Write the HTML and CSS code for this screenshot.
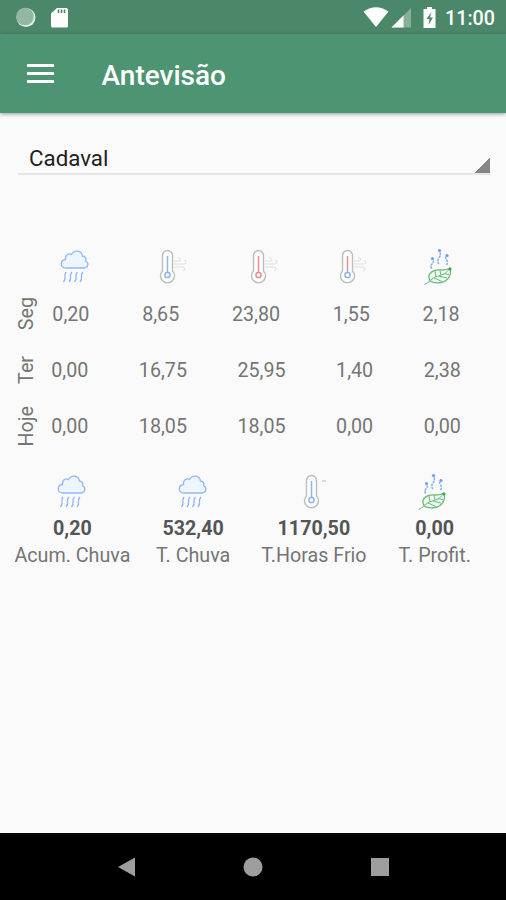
FILE: index.html
```html
<!DOCTYPE html>
<html lang="pt">
<head>
  <meta charset="UTF-8" />
  <meta name="viewport" content="width=device-width, initial-scale=1.0"/>
  <title>Antevisão</title>
  <link rel="stylesheet" href="styles.css">
</head>
<body>

<!-- shared icons -->
<svg class="symbols" width="0" height="0">
  <symbol id="rain" viewBox="0 0 40 40">
    <path d="M11 23C4.500 23 5 15 10.500 14.500C10 9.500 14 8 16.500 9.500C19 4.500 26.500 5 27.500 11C31 11.500 31.500 14 30.500 15.500C34.500 18 33 23 29 23Z" fill="#edf5ff" stroke="#92b8f5" stroke-width="1.300"/>
    <path d="M11 27q-1.500 2 -1 5t-1.500 5M17 27q-2 2 -1.500 5t-1.500 5M22.500 27q-2 2 -1.500 5t-1.500 5M28 27q-2 2 -1.500 5t-1.500 5" fill="none" stroke="#92b5ef" stroke-width="1.300"/>
  </symbol>
  <symbol id="thermo" viewBox="0 0 40 40">
    <path d="M15.500 26V10.500a5 5 0 0 1 10 0V26a7 7 0 1 1 -10 0Z" fill="#fdfdfd" stroke="#bdbdbd" stroke-width="1.400"/>
  </symbol>
  <symbol id="wind" viewBox="0 0 40 40">
    <path d="M27 19h10q2 0 2 -2t-2 -1.500M27 16h5q2 0 1.500 -2t-2.500 -1M27 22h9q2 0 2 2t-2 1.500" fill="none" stroke="#dcdcdc" stroke-width="0.900"/>
  </symbol>
  <symbol id="leaf" viewBox="0 0 40 40">
    <path d="M13 23.500q-2.500 -2 0 -4.500t0 -5M20 19q-2.500 -2.500 0 -6t.5 -6M27.500 20q2 -2.500 0 -5t.5 -4" fill="none" stroke="#86aef2" stroke-width="1.500" stroke-dasharray="2.500 .8"/>
    <circle cx="13.500" cy="13.500" r="1.500" fill="#6b9cf0"/>
    <circle cx="20.500" cy="5.500" r="1.600" fill="#6b9cf0"/>
    <circle cx="28" cy="10.500" r="1.600" fill="#6b9cf0"/>
    <path d="M11 36C7 28 15 24 22 25Q28 25 31 23C33 30 29 36 22 37.500Q15 38.500 11 36Z" fill="#f0faf1" stroke="#6bbb7d" stroke-width="1.300"/>
    <path d="M5.500 39.500Q9 38.500 11 35.500Q16 31 21 30.500T30.500 24M17 32l-1 -6M22 30l-1 -4.500M15 33l8 3.500M20 31l8 2M25 28.500l5 1" fill="none" stroke="#6bbb7d" stroke-width="1"/>
    <circle cx="31" cy="24" r="1.500" fill="#3da257"/>
  </symbol>
</svg>

<div class="status-bar">
  <svg class="status-left" width="80" height="34" viewBox="0 0 80 34">
    <circle cx="26" cy="17.500" r="9.500" fill="#e4eee8"/>
    <circle cx="25" cy="16.500" r="8.800" fill="#92b8a3"/>
    <path d="M57 8h9q2 0 2 2v16q0 1.500 -1.500 1.500h-14q-1.500 0 -1.500 -1.500V13.500Z" fill="#fff"/>
    <path d="M58.500 9.500v3.500M61.500 9.500v3.500M64.500 9.500v3.500" stroke="#4b886a" stroke-width="1.600"/>
  </svg>
  <svg class="status-right" width="80" height="34" viewBox="0 0 80 34">
    <path d="M2.500 11.500Q15 3 27.500 11.500L15 27Z" fill="#fff"/>
    <path d="M50 8v19.500H30.500Z" fill="#86b09a"/>
    <path d="M42.500 15.500v12H30.500Z" fill="#fff"/>
    <path d="M66 7h5v2h3.500v19h-12V9H66Z" fill="#fff"/>
    <path d="M70.500 12l-5 7h3l-1 6l4.500 -7.500h-3Z" fill="#4b886a"/>
  </svg>
  <span class="clock">11:00</span>
</div>

<div class="app-bar">
  <div class="menu"><span></span><span></span><span></span></div>
  <h1>Antevisão</h1>
</div>

<div class="content">
  <div class="spinner">Cadaval</div>

  <div class="icons">
    <div><svg class="icon rain"><use href="#rain"/></svg></div>
    <div>
      <svg class="icon" viewBox="0 0 40 40"><use href="#thermo"/><use href="#wind"/><path class="blue" d="M20.500 11v16"/><circle class="blue" cx="20.500" cy="30" r="2.600"/></svg>
    </div>
    <div>
      <svg class="icon" viewBox="0 0 40 40"><use href="#thermo"/><use href="#wind"/><path class="red" d="M20.500 11v16"/><circle class="red" cx="20.500" cy="30" r="2.600"/></svg>
    </div>
    <div>
      <svg class="icon mixed" viewBox="0 0 40 40"><use href="#thermo"/><use href="#wind"/><path class="red" d="M20.500 11v13"/><path class="blue" d="M20.500 24v3"/><circle class="blue" cx="20.500" cy="30" r="2.600"/></svg>
    </div>
    <div><svg class="icon"><use href="#leaf"/></svg></div>
  </div>

  <div class="day">
    <div class="name">Seg</div>
    <div class="values"><span>0,20</span><span>8,65</span><span>23,80</span><span>1,55</span><span>2,18</span></div>
  </div>
  <div class="day">
    <div class="name">Ter</div>
    <div class="values"><span>0,00</span><span>16,75</span><span>25,95</span><span>1,40</span><span>2,38</span></div>
  </div>
  <div class="day">
    <div class="name">Hoje</div>
    <div class="values"><span>0,00</span><span>18,05</span><span>18,05</span><span>0,00</span><span>0,00</span></div>
  </div>

  <div class="totals">
    <div class="total">
      <svg class="icon"><use href="#rain"/></svg>
      <b>0,20</b>
      <span>Acum. Chuva</span>
    </div>
    <div class="total">
      <svg class="icon"><use href="#rain"/></svg>
      <b>532,40</b>
      <span>T. Chuva</span>
    </div>
    <div class="total">
      <svg class="icon cold" viewBox="0 0 40 40"><use href="#thermo"/><path class="blue" d="M20.500 11v16"/><circle class="blue" cx="20.500" cy="30" r="2.600"/><path d="M31 11h4" stroke="#bbb"/></svg>
      <b>1170,50</b>
      <span>T.Horas Frio</span>
    </div>
    <div class="total">
      <svg class="icon profit"><use href="#leaf"/></svg>
      <b>0,00</b>
      <span>T. Profit.</span>
    </div>
  </div>
</div>

<div class="nav-bar">
  <svg width="20" height="20" viewBox="0 0 20 20"><path d="M1 10L18 .5v19Z"/></svg>
  <svg width="20" height="20" viewBox="0 0 20 20"><circle cx="10" cy="10" r="9.500"/></svg>
  <svg width="20" height="20" viewBox="0 0 20 20"><path d="M1 1h18v18H1Z"/></svg>
</div>

</body>
</html>
```
FILE: styles.css
```css
body {
  margin: 0;
  height: 900px;
  display: flex;
  flex-direction: column;
  font-family: Roboto, sans-serif;
  font-size: 19.7px;
  color: #757575;
  background-color: #fafafa;
  overflow: hidden;
}

.symbols {
  position: absolute;
}

.status-bar {
  display: flex;
  align-items: center;
  height: 34px;
  background-color: #4b886a;
  color: #fff;
}

.status-right {
  margin-left: auto;
}

.clock {
  width: 65px;
  padding-left: 4px;
  box-sizing: border-box;
  font-weight: 500;
  padding-top: 2px;
}

.app-bar {
  display: flex;
  align-items: center;
  height: 79px;
  padding-left: 26.5px;
  background-color: #4d9472;
  color: #fff;
  box-shadow: 0 1px 4px rgba(0, 0, 0, 0.4);
}

.menu {
  display: flex;
  flex-direction: column;
  gap: 5px;
  width: 27px;
}

.menu span {
  height: 3px;
  background-color: #fff;
}

h1 {
  margin: 3px 0 0 48px;
  font-size: 28px;
  font-weight: 500;
}

.content {
  flex: 1;
}

.spinner {
  height: 29px;
  margin: 31px 16px 0 18px;
  padding-left: 11px;
  border-bottom: 2px solid #e6e6e6;
  color: #212121;
  font-size: 22.3px;
  line-height: 29px;
  background: linear-gradient(135deg, transparent 50%, #868686 50%) right bottom / 18px 18px no-repeat border-box;
}

.icons {
  display: flex;
  padding: 70px 21.5px 1px 31.5px;
}

.icons div {
  flex: 1;
  display: flex;
  justify-content: center;
}

.icon {
  width: 40px;
  height: 40px;
}

.icons .rain {
  margin-left: -4px;
}

.mixed {
  margin-left: -3px;
}

.blue,
.red {
  fill: none;
  stroke: #8db5e8;
  stroke-width: 1.5;
}

.red {
  stroke: #ee8c8c;
}

.day {
  display: flex;
  align-items: center;
  height: 56px;
  padding: 0 20px 0 17px;
}

.name {
  width: 20px;
  line-height: 20px;
  writing-mode: vertical-rl;
  transform: rotate(180deg);
}

.values {
  flex: 1;
  display: flex;
  margin-left: -11px;
  padding-top: 1px;
}

.values span {
  flex: 1 1 auto;
  text-align: center;
}

.totals {
  display: flex;
  padding: 16px 11px 0 12px;
}

.total {
  flex: 1;
  display: flex;
  flex-direction: column;
  align-items: center;
  white-space: nowrap;
}

.total b {
  margin-top: 5px;
  line-height: 27px;
  color: #555;
}

.total span {
  line-height: 27px;
}

.cold {
  margin-left: -6px;
}

.profit {
  margin-left: -3px;
}

.nav-bar {
  display: flex;
  justify-content: center;
  align-items: center;
  gap: 106.5px;
  height: 67px;
  background-color: #000;
}

.nav-bar svg {
  fill: #9e9e9e;
}
```
